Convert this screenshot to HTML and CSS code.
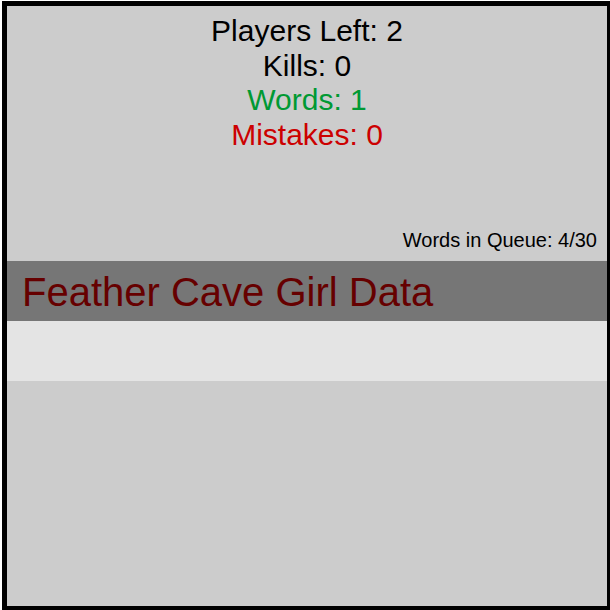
FILE: index.html
```html
<!DOCTYPE html>
<html>
<head>
<meta charset="utf-8">
<link rel="stylesheet" href="styles.css">
</head>
<body>
<div class="game">
  <div class="stats">
    <div class="stat">Players Left: 2</div>
    <div class="stat">Kills: 0</div>
    <div class="stat words">Words: 1</div>
    <div class="stat mistakes">Mistakes: 0</div>
  </div>
  <div class="queue">Words in Queue: 4/30</div>
  <div class="current">Feather Cave Girl Data</div>
  <div class="input"></div>
</div>
</body>
</html>
```

FILE: styles.css
```css
html, body {
  margin: 0;
  overflow: hidden;
}
body {
  padding: 1px 0 0 2px;
  font-family: "Liberation Sans", Arial, sans-serif;
}
.game {
  width: 600px;
  height: 600px;
  border: 5px solid #000;
  background: #ccc;
  display: flex;
  flex-direction: column;
}
.stats {
  padding-top: 8px;
  height: 215px;
  text-align: center;
  font-size: 30px;
  line-height: 34.5px;
  color: #000;
  box-sizing: border-box;
}
.words { color: #009933; }
.mistakes { color: #cc0000; }
.queue {
  text-align: right;
  font-size: 20px;
  line-height: 23px;
  padding: 8px 10px 0 0;
  height: 40px;
  box-sizing: border-box;
}
.current {
  height: 60px;
  background: #767676;
  color: #660000;
  font-size: 40px;
  line-height: 62px;
  padding-left: 15px;
}
.input {
  height: 60px;
  background: #e4e4e4;
}
```
